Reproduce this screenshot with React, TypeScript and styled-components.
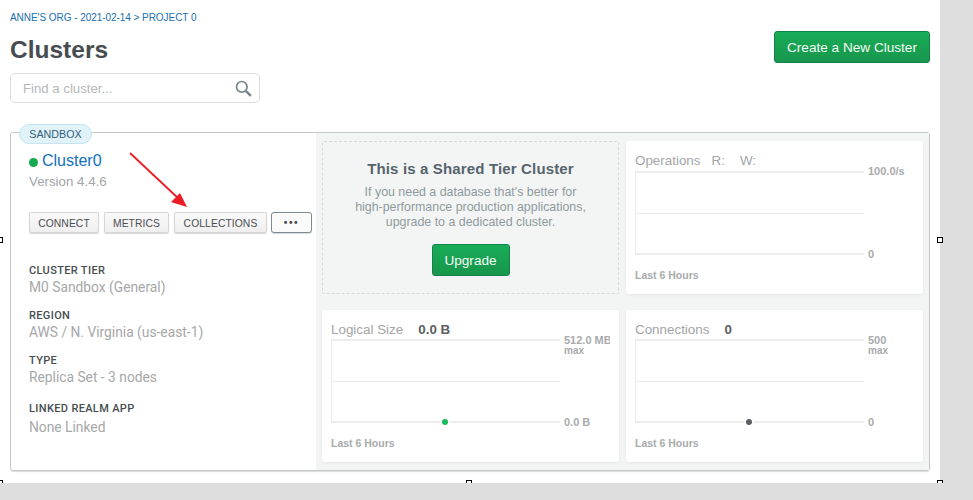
import { createGlobalStyle } from 'styled-components';
import styled from 'styled-components';

const GlobalStyle = createGlobalStyle`
  html, body {
    margin: 0;
    padding: 0;
    background: #dedede;
    font-family: "Liberation Sans", Arial, sans-serif;
  }
`;

const Canvas = styled.div`
  position: relative;
  width: 940px;
  height: 483px;
  box-sizing: border-box;
  padding: 12px 10px 0;
  background: #fff;
`;

const Handle = styled.span<{ $x: number; $y: number }>`
  position: absolute;
  left: ${(p) => p.$x - 3}px;
  top: ${(p) => p.$y - 3}px;
  width: 6px;
  height: 6px;
  box-sizing: border-box;
  background: #fff;
  border: 1px solid #000;
`;

const Crumb = styled.div`
  font-size: 10px;
  line-height: 11px;
  color: #1a6fb3;
  letter-spacing: -0.05px;
`;

const HeaderRow = styled.div`
  display: flex;
  justify-content: space-between;
  align-items: flex-start;
  height: 42px;
  margin-top: 8px;
`;

const Title = styled.h1`
  margin: 4px 0 0;
  font-size: 24.5px;
  line-height: 30px;
  font-weight: 700;
  color: #464c4f;
`;

const GreenButton = styled.button<{ $wide?: boolean }>`
  width: ${(p) => (p.$wide ? 156 : 78)}px;
  height: 32px;
  padding: 0;
  border: 1px solid #13814a;
  border-radius: 3px;
  background: linear-gradient(#18ad57, #18964c);
  color: #f4fbf6;
  font-family: inherit;
  font-size: 13.6px;
`;

const SearchBox = styled.div`
  display: flex;
  align-items: center;
  justify-content: space-between;
  width: 250px;
  height: 30px;
  box-sizing: border-box;
  padding: 0 7px 0 12px;
  border: 1px solid #d8dcde;
  border-radius: 5px;
  font-size: 13.2px;
  color: #b5b8b9;
`;

const ClusterCard = styled.div`
  position: relative;
  display: flex;
  width: 920px;
  height: 339px;
  box-sizing: border-box;
  margin-top: 29px;
  border: 1px solid #c5c8c8;
  border-radius: 3px;
  box-shadow: 0 1px 1px #dcdcdc;
`;

const SandboxPill = styled.span`
  position: absolute;
  left: 8px;
  top: -9px;
  width: 73px;
  height: 20px;
  box-sizing: border-box;
  border: 1px solid #c5e4f2;
  border-radius: 10px;
  background: #e1f2f9;
  color: #30607a;
  font-size: 10.7px;
  line-height: 18px;
  text-align: center;
`;

const InfoPanel = styled.div`
  width: 305px;
  box-sizing: border-box;
  padding: 19px 0 0 18px;
`;

const NameRow = styled.div`
  display: flex;
  align-items: center;
  gap: 4px;
  height: 18px;
  color: #0f6fbd;
  font-size: 16px;
`;

const StatusDot = styled.span`
  width: 9px;
  height: 9px;
  margin-top: 2px;
  border-radius: 50%;
  background: #16a94f;
`;

const Version = styled.div`
  margin-top: 4px;
  font-size: 13.3px;
  line-height: 16px;
  color: #a3a5a6;
`;

const ButtonRow = styled.div`
  display: flex;
  gap: 5px;
  margin-top: 22px;
`;

const ActionButton = styled.button<{ $width: number }>`
  width: ${(p) => p.$width}px;
  height: 21px;
  padding: 1px 0 0;
  border: 1px solid #d4d6d6;
  border-radius: 2px;
  background: linear-gradient(#fafafa, #efefef);
  box-shadow: 0 1px 1px #d8d8d8;
  color: #4a4e50;
  font-family: inherit;
  font-size: 10.3px;
  letter-spacing: 0.1px;
`;

const MoreButton = styled(ActionButton)`
  margin-left: -1px;
  border-color: #7d8a91;
  border-radius: 3px;
  background: #fafafa;
  font-weight: 700;
  letter-spacing: 1.5px;
  line-height: 14px;
`;

const InfoList = styled.div`
  margin-top: 31px;
`;

const InfoItem = styled.div<{ $gap: number }>`
  margin-bottom: ${(p) => p.$gap}px;
`;

const InfoLabel = styled.div`
  font-family: Roboto, "Liberation Sans", sans-serif;
  font-size: 11px;
  font-weight: 500;
  line-height: 14px;
  letter-spacing: 0.35px;
  color: #464c4f;
`;

const InfoValue = styled.div<{ $drop?: number }>`
  margin-top: ${(p) => p.$drop ?? 1}px;
  font-family: Roboto, "Liberation Sans", sans-serif;
  font-size: 13.8px;
  line-height: 16px;
  color: #a6a8a9;
`;

const MetricsPanel = styled.div`
  flex: 1;
  display: grid;
  grid-template-columns: 297px 297px;
  grid-template-rows: 153px 152px;
  column-gap: 7px;
  row-gap: 16px;
  padding: 8px 0 0 6px;
  background: #f3f5f4;
`;

const UpgradeBox = styled.div`
  display: flex;
  flex-direction: column;
  align-items: center;
  box-sizing: border-box;
  padding-top: 18px;
  border: 1px dashed #d6d9d9;
  border-radius: 2px;
`;

const UpgradeTitle = styled.div`
  font-size: 15px;
  line-height: 18px;
  font-weight: 700;
  color: #56646c;
  letter-spacing: 0.15px;
`;

const UpgradeText = styled.p`
  margin: 7px 0 14px;
  font-size: 12.4px;
  line-height: 15px;
  text-align: center;
  color: #8f9a9d;
`;

const MetricCard = styled.div`
  box-sizing: border-box;
  padding: 12px 0 0 9px;
  border-radius: 3px;
  background: #fff;
  box-shadow: 0 1px 3px #e2e4e4;
  overflow: hidden;
`;

const MetricHead = styled.div<{ $height: number }>`
  display: flex;
  height: ${(p) => p.$height}px;
  font-size: 13.4px;
  line-height: 16px;
  color: #a3a5a6;
`;

const HeadLabel = styled.span<{ $gap?: number }>`
  margin-right: ${(p) => p.$gap ?? 0}px;
`;

const HeadValue = styled.span`
  font-weight: 700;
  color: #5b5f61;
`;

const ChartRow = styled.div`
  display: flex;
  gap: 4px;
`;

const Plot = styled.div`
  position: relative;
  display: flex;
  flex-direction: column;
  flex: none;
  width: 229px;
  height: 84px;
  box-sizing: border-box;
  border-top: 2px solid #ececec;
  border-bottom: 2px solid #ececec;
  border-left: 1px solid #ececec;
`;

const PlotMid = styled.div`
  height: 40px;
  border-bottom: 1px solid #ececec;
`;

const PlotDot = styled.span<{ $color: string }>`
  position: absolute;
  left: 108px;
  bottom: -6px;
  width: 6px;
  height: 6px;
  border: 2px solid #fff;
  border-radius: 50%;
  background: ${(p) => p.$color};
`;

const AxisLabels = styled.div`
  display: flex;
  flex-direction: column;
  justify-content: space-between;
  width: 46px;
  height: 96px;
  margin: -6px 0;
  overflow: hidden;
  font-size: 11px;
  font-weight: 700;
  line-height: 13px;
  color: #a9abac;
  white-space: nowrap;
`;

const AxisTop = styled.div<{ $nudge?: boolean }>`
  padding-top: ${(p) => (p.$nudge ? 1 : 0)}px;
  line-height: 12px;
`;

const AxisMax = styled.div`
  margin-top: 1px;
  font-size: 10px;
  line-height: 8px;
`;

const Footnote = styled.div`
  margin-top: 14px;
  font-size: 10.5px;
  font-weight: 700;
  line-height: 13px;
  color: #a9abac;
`;

const ArrowLayer = styled.svg`
  position: absolute;
  left: 125px;
  top: 148px;
`;

type ChartProps = {
  top: string;
  bottom: string;
  max?: boolean;
  dot?: string;
};

const Chart = ({ top, bottom, max, dot }: ChartProps) => (
  <>
    <ChartRow>
      <Plot>
        <PlotMid />
        {dot && <PlotDot $color={dot} />}
      </Plot>
      <AxisLabels>
        <div>
          <AxisTop $nudge={max}>{top}</AxisTop>
          {max && <AxisMax>max</AxisMax>}
        </div>
        <div>{bottom}</div>
      </AxisLabels>
    </ChartRow>
    <Footnote>Last 6 Hours</Footnote>
  </>
);

export default function App() {
  return (
    <Canvas>
      <GlobalStyle />
      <Crumb>ANNE'S ORG - 2021-02-14 &gt; PROJECT 0</Crumb>
      <HeaderRow>
        <Title>Clusters</Title>
        <GreenButton $wide>Create a New Cluster</GreenButton>
      </HeaderRow>
      <SearchBox>
        Find a cluster...
        <svg width="17" height="17" viewBox="0 0 17 17" fill="none" stroke="#76878c">
          <circle cx="6.8" cy="6.8" r="5.3" strokeWidth="1.7" />
          <path d="M10.8 10.8 L15.8 15.8" strokeWidth="2.6" />
        </svg>
      </SearchBox>

      <ClusterCard>
        <SandboxPill>SANDBOX</SandboxPill>
        <InfoPanel>
          <NameRow>
            <StatusDot />
            Cluster0
          </NameRow>
          <Version>Version 4.4.6</Version>
          <ButtonRow>
            <ActionButton $width={70}>CONNECT</ActionButton>
            <ActionButton $width={65}>METRICS</ActionButton>
            <ActionButton $width={93}>COLLECTIONS</ActionButton>
            <MoreButton $width={41}>•••</MoreButton>
          </ButtonRow>
          <InfoList>
            <InfoItem $gap={14}>
              <InfoLabel>CLUSTER TIER</InfoLabel>
              <InfoValue>M0 Sandbox (General)</InfoValue>
            </InfoItem>
            <InfoItem $gap={14}>
              <InfoLabel>REGION</InfoLabel>
              <InfoValue>AWS / N. Virginia (us-east-1)</InfoValue>
            </InfoItem>
            <InfoItem $gap={17}>
              <InfoLabel>TYPE</InfoLabel>
              <InfoValue>Replica Set - 3 nodes</InfoValue>
            </InfoItem>
            <InfoItem $gap={0}>
              <InfoLabel>LINKED REALM APP</InfoLabel>
              <InfoValue $drop={3}>None Linked</InfoValue>
            </InfoItem>
          </InfoList>
        </InfoPanel>

        <MetricsPanel>
          <UpgradeBox>
            <UpgradeTitle>This is a Shared Tier Cluster</UpgradeTitle>
            <UpgradeText>
              If you need a database that's better for
              <br />
              high-performance production applications,
              <br />
              upgrade to a dedicated cluster.
            </UpgradeText>
            <GreenButton>Upgrade</GreenButton>
          </UpgradeBox>

          <MetricCard>
            <MetricHead $height={18}>
              <HeadLabel $gap={11}>Operations</HeadLabel>
              <HeadLabel $gap={15}>R:</HeadLabel>
              <HeadLabel>W:</HeadLabel>
            </MetricHead>
            <Chart top="100.0/s" bottom="0" />
          </MetricCard>

          <MetricCard>
            <MetricHead $height={17}>
              <HeadLabel $gap={15}>Logical Size</HeadLabel>
              <HeadValue>0.0 B</HeadValue>
            </MetricHead>
            <Chart top="512.0 MB" bottom="0.0 B" max dot="#16bb5a" />
          </MetricCard>

          <MetricCard>
            <MetricHead $height={17}>
              <HeadLabel $gap={15}>Connections</HeadLabel>
              <HeadValue>0</HeadValue>
            </MetricHead>
            <Chart top="500" bottom="0" max dot="#5b5f61" />
          </MetricCard>
        </MetricsPanel>
      </ClusterCard>

      <ArrowLayer width="70" height="66" viewBox="0 0 70 66">
        <path d="M5 5 L54 51" stroke="#ec1c24" strokeWidth="1.8" fill="none" />
        <path d="M62 59 L46 54 L55 45 Z" fill="#ec1c24" />
      </ArrowLayer>

      <Handle $x={0} $y={240} />
      <Handle $x={940} $y={240} />
      <Handle $x={0} $y={483} />
      <Handle $x={469} $y={483} />
      <Handle $x={940} $y={483} />
    </Canvas>
  );
}
